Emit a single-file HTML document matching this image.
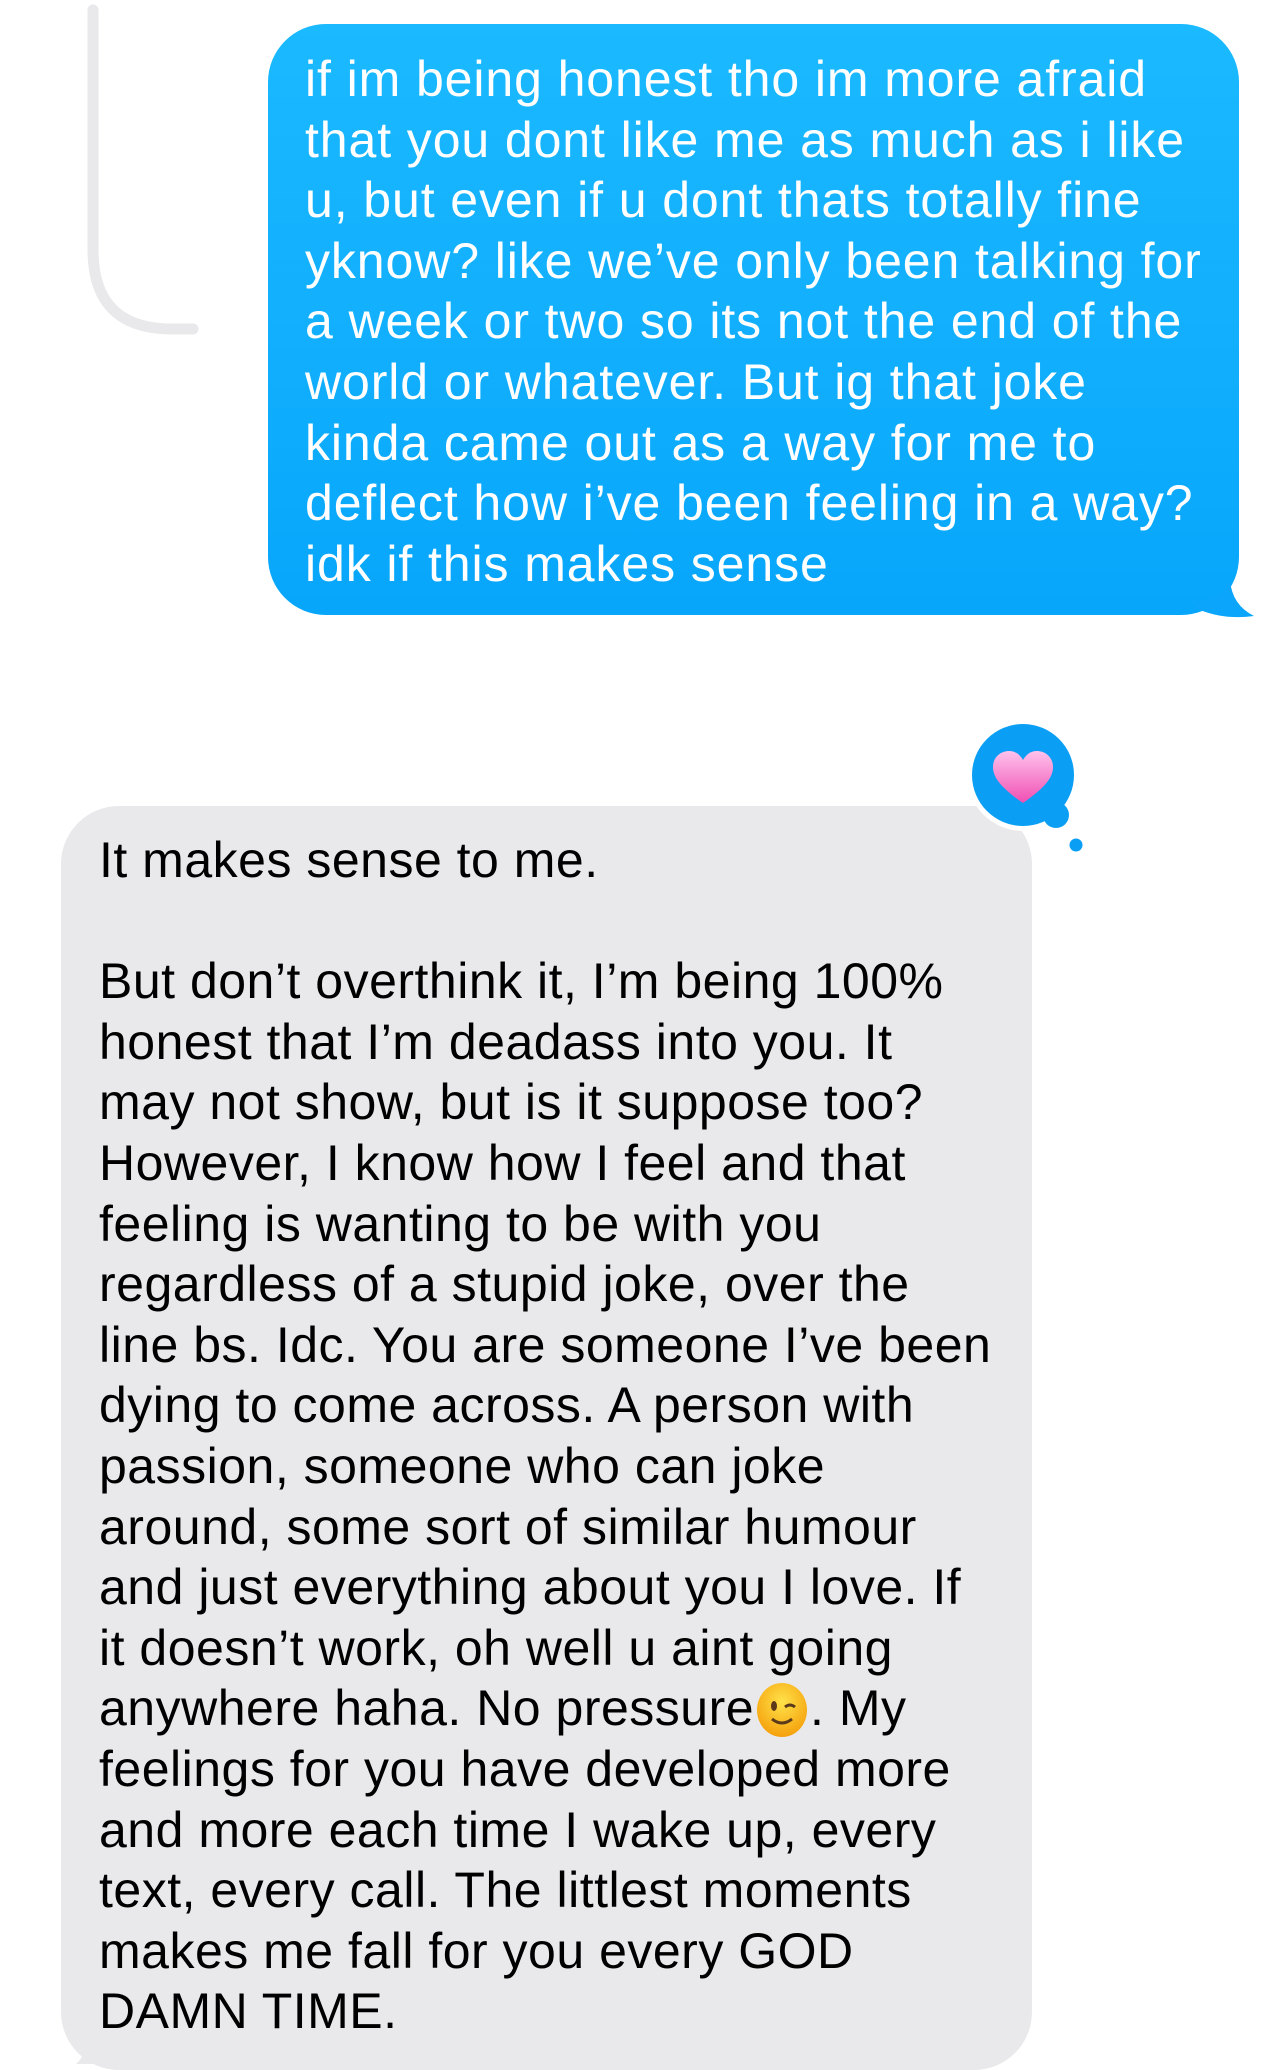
<!DOCTYPE html>
<html><head><meta charset="utf-8">
<style>
html,body{margin:0;padding:0;background:#fff;}
body{width:1284px;height:2064px;position:relative;overflow:hidden;font-family:"Liberation Sans",sans-serif;}
.blue{position:absolute;left:268px;top:24px;width:971px;height:591px;border-radius:58px;background:linear-gradient(#1bb9ff,#08a6fb);}
.gray{position:absolute;left:61px;top:806px;width:971px;height:1264px;border-radius:58px;background:#e9e9eb;}
.txt{position:absolute;font-size:50px;line-height:60.6px;white-space:pre;}
.w{color:#fff;left:305px;top:49px;letter-spacing:0.9px;}
.k{color:#000;left:99px;top:830px;letter-spacing:0.5px;}
.emo{display:inline-block;width:56px;height:56px;vertical-align:-12px;}
</style></head><body>
<svg style="position:absolute;left:0;top:0" width="260" height="340"><path d="M93 10 V250 Q93 329 172 329 H193" fill="none" stroke="#e9e9eb" stroke-width="11" stroke-linecap="round"/></svg>
<div class="blue"></div>
<svg style="position:absolute;left:1190px;top:560px" width="70" height="60"><path d="M0 40 Q30 45 40 20 Q42 45 64 56 Q35 60 10 50 Z" fill="#0ba6fb"/></svg>
<div class="txt w">if im being honest tho im more afraid
that you dont like me as much as i like
u, but even if u dont thats totally fine
yknow? like we’ve only been talking for
a week or two so its not the end of the
world or whatever. But ig that joke
kinda came out as a way for me to
deflect how i’ve been feeling in a way?
idk if this makes sense</div>
<div class="gray"></div>
<svg style="position:absolute;left:38px;top:2010px" width="70" height="54"><path d="M60 0 Q50 40 44 54 L38 54 Q55 40 40 0 Z" fill="#e9e9eb"/><path d="M62 0 Q62 35 40 54 L90 54 Q70 40 70 0 Z" fill="#e9e9eb"/></svg>
<div class="txt k">It makes sense to me.

But don’t overthink it, I’m being 100%
honest that I’m deadass into you. It
may not show, but is it suppose too?
However, I know how I feel and that
feeling is wanting to be with you
regardless of a stupid joke, over the
line bs. Idc. You are someone I’ve been
dying to come across. A person with
passion, someone who can joke
around, some sort of similar humour
and just everything about you I love. If
it doesn’t work, oh well u aint going
anywhere haha. No pressure<svg class="emo" viewBox="0 0 56 56"><defs><radialGradient id="g" cx="50%" cy="35%" r="65%"><stop offset="0" stop-color="#ffe24a"/><stop offset="1" stop-color="#f5a10c"/></radialGradient></defs><ellipse cx="28" cy="29" rx="25" ry="27" fill="url(#g)"/><ellipse cx="20" cy="25" rx="3" ry="5" fill="#5a3a1a"/><path d="M31 26 Q36 22 41 26" stroke="#5a3a1a" stroke-width="3" fill="none"/><path d="M18 38 Q28 46 38 38" stroke="#5a3a1a" stroke-width="3" fill="none"/></svg>. My
feelings for you have developed more
and more each time I wake up, every
text, every call. The littlest moments
makes me fall for you every GOD
DAMN TIME.</div>
<svg style="position:absolute;left:960px;top:715px" width="130" height="140">
<circle cx="63" cy="60" r="56" fill="#fff"/>
<circle cx="96" cy="100" r="17" fill="#fff"/>
<circle cx="63" cy="60" r="51" fill="#0a9ff5"/>
<circle cx="96" cy="100" r="13" fill="#0a9ff5"/>
<circle cx="116" cy="130" r="6.5" fill="#0a9ff5"/>
<defs><linearGradient id="h" x1="0" y1="0" x2="0" y2="1"><stop offset="0" stop-color="#ffc2ec"/><stop offset="1" stop-color="#f04fb3"/></linearGradient></defs>
<path d="M63 88 C40 72 33 62 33 52 C33 42 41 36 49 36 C56 36 60 40 63 45 C66 40 70 36 77 36 C85 36 93 42 93 52 C93 62 86 72 63 88 Z" fill="url(#h)"/>
</svg>
</body></html>
